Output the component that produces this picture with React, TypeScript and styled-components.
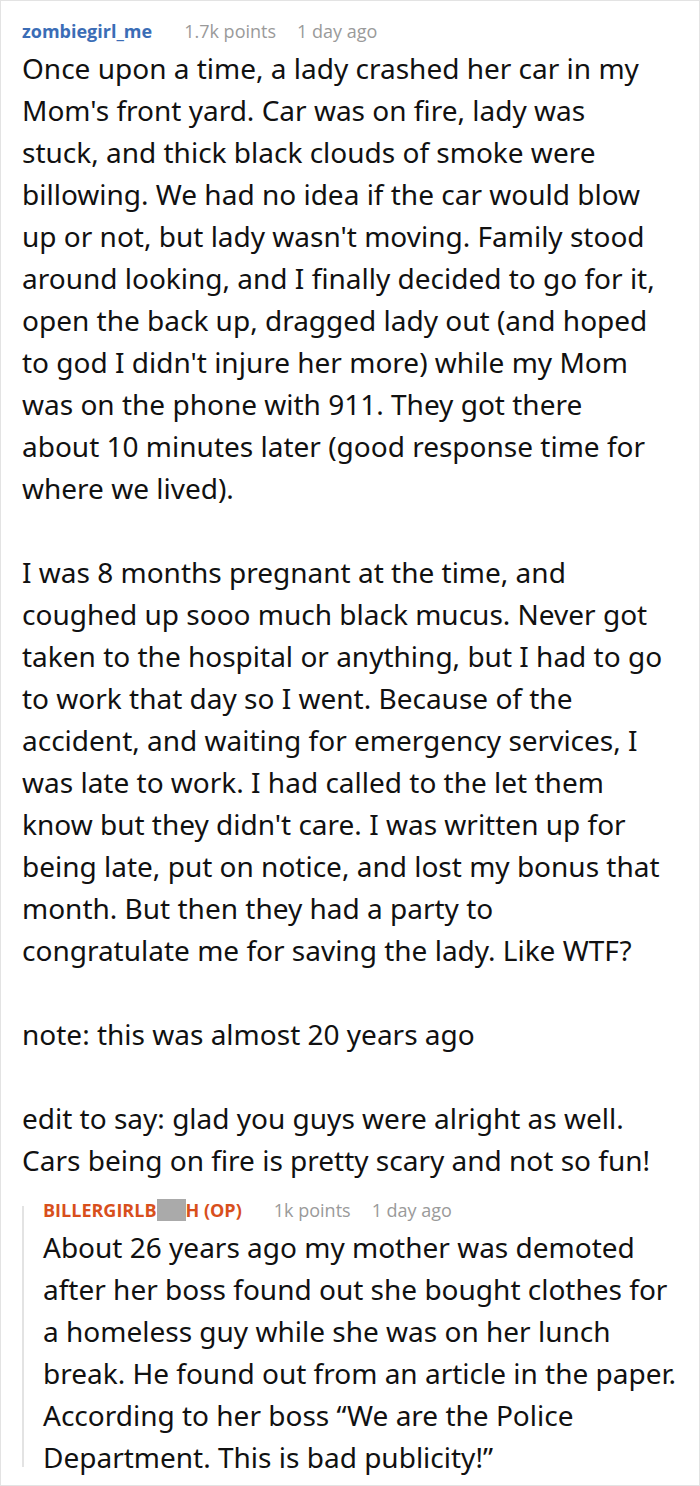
import styled, { createGlobalStyle } from "styled-components";

const GlobalStyle = createGlobalStyle`
  html, body {
    margin: 0;
    padding: 0;
    background: #fff;
  }
  body {
    font-family: "Noto Sans", "Open Sans", sans-serif;
  }
`;

interface MetaProps {
  user: React.ReactNode;
  points: string;
  age: string;
  op?: boolean;
}

const CommentMeta = ({ user, points, age, op }: MetaProps) => (
  <MetaRow>
    <UserName $op={op}>{user}</UserName>
    <Points>{points}</Points>
    <Age>{age}</Age>
  </MetaRow>
);

const App = () => {
  return (
    <>
      <GlobalStyle />
      <Page>
        <CommentMeta user="zombiegirl_me" points="1.7k points" age="1 day ago" />
        <Body>
          <Para>
            Once upon a time, a lady crashed her car in my Mom's front yard. Car
            was on fire, lady was stuck, and thick black clouds of smoke were
            billowing. We had no idea if the car would blow up or not, but lady
            wasn't moving. Family stood around looking, and I finally decided to
            go for it, open the back up, dragged lady out (and hoped to god I
            didn't injure her more) while my Mom was on the phone with 911. They
            got there about 10 minutes later (good response time for where we
            lived).
          </Para>
          <Para>
            I was 8 months pregnant at the time, and coughed up sooo much black
            mucus. Never got taken to the hospital or anything, but I had to go
            to work that day so I went. Because of the accident, and waiting for
            emergency services, I was late to work. I had called to the let them
            know but they didn't care. I was written up for being late, put on
            notice, and lost my bonus that month. But then they had a party to
            congratulate me for saving the lady. Like WTF?
          </Para>
          <Para>note: this was almost 20 years ago</Para>
          <Para>
            edit to say: glad you guys were alright as well. Cars being on fire
            is pretty scary and not so fun!
          </Para>
        </Body>
        <Reply>
          <CommentMeta
            op
            user={
              <>
                BILLERGIRLB<Redacted />H (OP)
              </>
            }
            points="1k points"
            age="1 day ago"
          />
          <Body>
            <Para>
              About 26 years ago my mother was demoted after her boss found out
              she bought clothes for a homeless guy while she was on her lunch
              break. He found out from an article in the paper. According to her
              boss “We are the Police Department. This is bad publicity!”
            </Para>
          </Body>
        </Reply>
      </Page>
    </>
  );
};

export default App;

const Page = styled.div`
  box-sizing: border-box;
  width: 700px;
  height: 1486px;
  border: 1px solid #e3e3e3;
  padding: 14px 33px 0 21px;
  overflow: hidden;
`;

const MetaRow = styled.div`
  display: flex;
  align-items: baseline;
  height: 32px;
  line-height: 32px;
  font-family: "Open Sans", "Noto Sans", sans-serif;
  font-size: 18px;
  white-space: nowrap;
`;

const UserName = styled.span<{ $op?: boolean }>`
  font-weight: 700;
  color: ${(p) => (p.$op ? "#d84f1c" : "#3b6db6")};
  display: inline-flex;
  align-items: center;
`;

const Redacted = styled.span`
  display: inline-block;
  width: 29px;
  height: 22px;
  background: #aaaaaa;
`;

const Points = styled.span`
  margin-left: 32px;
  color: #9a9a9a;
`;

const Age = styled.span`
  margin-left: 21px;
  color: #9a9a9a;
`;

const Body = styled.div`
  font-size: 28px;
  line-height: 42px;
  color: #111;
`;

const Para = styled.p`
  margin: 0 0 42px;

  &:last-child {
    margin-bottom: 0;
  }
`;

const Reply = styled.div`
  position: relative;
  margin-top: 13px;
  margin-right: -12px;
  padding-left: 21px;

  &::before {
    content: "";
    position: absolute;
    left: 0;
    top: 12px;
    bottom: 11px;
    width: 2px;
    background: #e3e3e3;
  }
`;
